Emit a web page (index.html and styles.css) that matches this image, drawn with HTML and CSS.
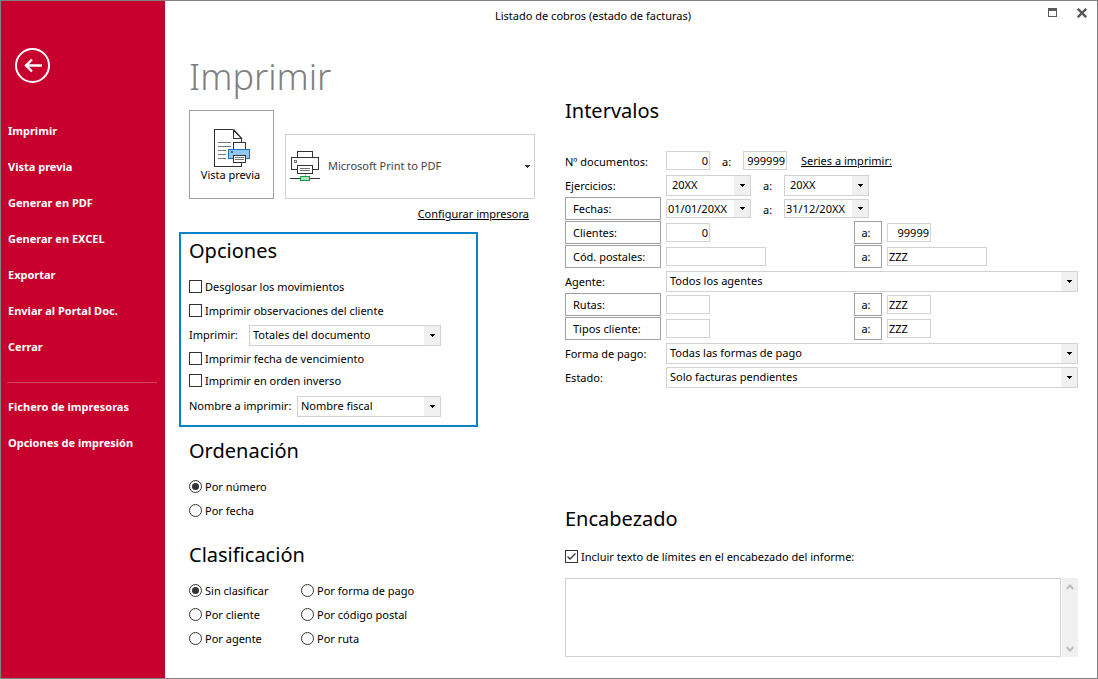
FILE: index.html
```html
<!DOCTYPE html>
<html lang="es">
<head>
<meta charset="utf-8">
<title>Listado de cobros (estado de facturas)</title>
<link rel="stylesheet" href="styles.css">
</head>
<body>
<div class="window">
  <nav class="sidebar">
    <button class="back" type="button" aria-label="Volver">
      <svg width="35" height="35" viewBox="0 0 35 35" fill="none" stroke="#fff">
        <circle cx="17.500" cy="17.500" r="16.500" stroke-width="2"/>
        <path d="M10 17.500H27M17 11.500L11 17.500L17 23.500" stroke-width="2.400"/>
      </svg>
    </button>
    <a class="nav-link" href="#">Imprimir</a>
    <a class="nav-link" href="#">Vista previa</a>
    <a class="nav-link" href="#">Generar en PDF</a>
    <a class="nav-link" href="#">Generar en EXCEL</a>
    <a class="nav-link" href="#">Exportar</a>
    <a class="nav-link" href="#">Enviar al Portal Doc.</a>
    <a class="nav-link" href="#">Cerrar</a>
    <hr class="nav-rule">
    <a class="nav-link" href="#">Fichero de impresoras</a>
    <a class="nav-link" href="#">Opciones de impresión</a>
  </nav>

  <main class="main">
    <header class="titlebar">
      <div class="window-title">Listado de cobros (estado de facturas)</div>
      <div class="window-controls">
        <button class="control" type="button" aria-label="Maximizar">
          <svg width="10" height="10" viewBox="0 0 10 10" shape-rendering="crispEdges"><path d="M0 0h9v9H0zM1 3v5h7V3z" fill="#5a5a5a" fill-rule="evenodd"/></svg>
        </button>
        <button class="control" type="button" aria-label="Cerrar ventana">
          <svg width="10" height="10" viewBox="0 0 10 10"><path d="M.8.8L9.200 9.200M9.200.8L.8 9.200" stroke="#5a5a5a" stroke-width="2.400"/></svg>
        </button>
      </div>
    </header>

    <div class="content">
      <div class="left">
        <h1 class="page-title">Imprimir</h1>
        <div class="printer-bar">
          <button class="preview" type="button">
            <svg width="41" height="38" viewBox="-4 0 41 38" fill="none" stroke="#333" shape-rendering="crispEdges">
              <path d="M27.500 13V9.500L18.500 .5H.5V37.500H27.500V34" fill="#fff"/>
              <path d="M19.500 .5V9.500H27.500" />
              <path d="M19.500 .5L28 10" shape-rendering="auto" stroke-width="1.400"/>
              <path d="M4 13.500H17M4 17.500H17M4 21.500H12M4 25.500H12M4 29.500H12" stroke="#777"/>
              <path d="M19.500 20V13.500H31.500V20" fill="#fff"/>
              <path d="M14.500 20.500H35.500V29.500H14.500Z" fill="#92c7f1" stroke="#1a73c0"/>
              <path d="M17 22h2v2h-2z" fill="#1a73c0" stroke="none"/>
              <path d="M19.500 26.500H31.500V33.500H19.500Z" fill="#fff"/>
              <path d="M21 28.500H30M21 30.500H30" stroke="#777"/>
            </svg>
            <span>Vista previa</span>
          </button>
          <div class="printer-side">
            <button class="printer" type="button" aria-haspopup="listbox">
              <svg width="30" height="31" viewBox="0 0 30 31" fill="none" stroke="#333" shape-rendering="crispEdges">
                <path d="M7.500 7V.5H22.500V7"/>
                <path d="M7 18.500H1.500V6.500H28.500V18.500H23"/>
                <path d="M4.500 9.500h2v2h-2z" stroke="#777"/>
                <path d="M7.500 14.500H22.500V22.500H7.500Z" fill="#fff"/>
                <path d="M10 17.500H20M10 19.500H20" stroke="#777"/>
                <path d="M15.500 23V25" stroke="#aaa"/>
                <path d="M0 27.500H30"/>
                <path d="M10.500 25.500H19.500V29.500H10.500Z" fill="#b5e0bd" stroke="#109a42"/>
              </svg>
              <span class="printer-name">Microsoft Print to PDF</span>
              <svg width="5" height="3" viewBox="0 0 5 3" shape-rendering="crispEdges"><path d="M0 0H5V1H4V2H3V3H2V2H1V1H0Z" fill="#333"/></svg>
            </button>
            <a class="link" href="#">Configurar impresora</a>
          </div>
        </div>

        <section class="options">
          <h2>Opciones</h2>
          <label class="row check"><input type="checkbox">Desglosar los movimientos</label>
          <label class="row check"><input type="checkbox">Imprimir observaciones del cliente</label>
          <div class="row spread">
            <label for="detail">Imprimir:</label>
            <select id="detail" class="w192"><option>Totales del documento</option></select>
          </div>
          <label class="row check"><input type="checkbox">Imprimir fecha de vencimiento</label>
          <label class="row check short"><input type="checkbox">Imprimir en orden inverso</label>
          <div class="row spread tall">
            <label for="name">Nombre a imprimir:</label>
            <select id="name" class="w144"><option>Nombre fiscal</option></select>
          </div>
        </section>

        <section class="order">
          <h2>Ordenación</h2>
          <label class="row check"><input type="radio" name="order" checked>Por número</label>
          <label class="row check"><input type="radio" name="order">Por fecha</label>
        </section>

        <section class="classify">
          <h2>Clasificación</h2>
          <div class="radio-grid">
            <label class="row check"><input type="radio" name="group" checked>Sin clasificar</label>
            <label class="row check"><input type="radio" name="group">Por forma de pago</label>
            <label class="row check"><input type="radio" name="group">Por cliente</label>
            <label class="row check"><input type="radio" name="group">Por código postal</label>
            <label class="row check"><input type="radio" name="group">Por agente</label>
            <label class="row check"><input type="radio" name="group">Por ruta</label>
          </div>
        </section>
      </div>

      <div class="right">
        <section class="ranges">
          <h2>Intervalos</h2>
          <div class="field">
            <label class="caption" for="doc-from">Nº documentos:</label>
            <div class="range">
              <input id="doc-from" class="w44 num" type="text" value="0">
              <label class="to" for="doc-to">a:</label>
              <input id="doc-to" class="w44 num" type="text" value="999999">
              <a class="link series" href="#">Series a imprimir:</a>
            </div>
          </div>
          <div class="field">
            <label class="caption" for="year-from">Ejercicios:</label>
            <div class="range">
              <select id="year-from" class="w85"><option>20XX</option></select>
              <label class="to" for="year-to">a:</label>
              <select id="year-to" class="w85"><option>20XX</option></select>
            </div>
          </div>
          <div class="field">
            <button class="pick" type="button">Fechas:</button>
            <div class="range">
              <select class="w85 date" aria-label="Fecha inicial"><option>01/01/20XX</option></select>
              <label class="to" for="date-to">a:</label>
              <select id="date-to" class="w85 date"><option>31/12/20XX</option></select>
            </div>
          </div>
          <div class="field">
            <button class="pick" type="button">Clientes:</button>
            <div class="range">
              <div class="from"><input class="w44 num" type="text" value="0" aria-label="Cliente inicial"></div>
              <button class="pick-to" type="button">a:</button>
              <input class="w44 num" type="text" value="99999" aria-label="Cliente final">
            </div>
          </div>
          <div class="field">
            <button class="pick" type="button">Cód. postales:</button>
            <div class="range">
              <div class="from"><input class="w100" type="text" aria-label="Código postal inicial"></div>
              <button class="pick-to" type="button">a:</button>
              <input class="w100" type="text" value="ZZZ" aria-label="Código postal final">
            </div>
          </div>
          <div class="field">
            <label class="caption" for="agent">Agente:</label>
            <select id="agent"><option>Todos los agentes</option></select>
          </div>
          <div class="field">
            <button class="pick" type="button">Rutas:</button>
            <div class="range">
              <div class="from"><input class="w44" type="text" aria-label="Ruta inicial"></div>
              <button class="pick-to" type="button">a:</button>
              <input class="w44" type="text" value="ZZZ" aria-label="Ruta final">
            </div>
          </div>
          <div class="field">
            <button class="pick" type="button">Tipos cliente:</button>
            <div class="range">
              <div class="from"><input class="w44" type="text" aria-label="Tipo de cliente inicial"></div>
              <button class="pick-to" type="button">a:</button>
              <input class="w44" type="text" value="ZZZ" aria-label="Tipo de cliente final">
            </div>
          </div>
          <div class="field">
            <label class="caption" for="payment">Forma de pago:</label>
            <select id="payment"><option>Todas las formas de pago</option></select>
          </div>
          <div class="field">
            <label class="caption" for="status">Estado:</label>
            <select id="status"><option>Solo facturas pendientes</option></select>
          </div>
        </section>

        <section class="heading-text">
          <h2>Encabezado</h2>
          <label class="row check"><input type="checkbox" checked>Incluir texto de límites en el encabezado del informe:</label>
          <div class="memo">
            <textarea aria-label="Texto del encabezado"></textarea>
            <div class="scrollbar">
              <button type="button" aria-label="Subir"><svg width="8" height="6" viewBox="0 0 8 6"><path d="M.7 5L4 1.500L7.300 5" fill="none" stroke="#bdbdbd" stroke-width="2"/></svg></button>
              <button type="button" aria-label="Bajar"><svg width="8" height="6" viewBox="0 0 8 6"><path d="M.7 1L4 4.500L7.300 1" fill="none" stroke="#bdbdbd" stroke-width="2"/></svg></button>
            </div>
          </div>
        </section>
      </div>
    </div>
  </main>
</div>
</body>
</html>
```
FILE: styles.css
```css
* { box-sizing: border-box; }

body {
  margin: 0;
  background: #fff;
  color: #000;
  font: 11px/16px "Noto Sans", "Open Sans", sans-serif;
}

button, input, select, textarea {
  margin: 0;
  padding: 0;
  border: 0;
  border-radius: 0;
  background: none;
  color: inherit;
  font: inherit;
}

.window {
  display: grid;
  grid-template-columns: 164px 1fr;
  min-height: 100vh;
  border: 1px solid #808080;
}

/* Sidebar */
.sidebar {
  display: flex;
  flex-direction: column;
  padding: 47px 7px 0;
  background: #c8002d;
  color: #fff;
}
.back {
  width: 35px;
  height: 35px;
  margin: 0 0 30px 7px;
}
.back svg { display: block; }
.nav-link {
  height: 36px;
  color: #fff;
  font-weight: 700;
  line-height: 36px;
  text-decoration: none;
}
.nav-rule {
  width: 150px;
  margin: 17px 0 6px -1px;
  border: 0;
  border-top: 1px solid #d64060;
}

/* Title bar */
.titlebar {
  display: flex;
  height: 30px;
}
.window-title {
  flex: 1;
  line-height: 30px;
  text-align: center;
}
.window-controls {
  display: flex;
  gap: 19px;
  width: 76px;
  padding: 7px 0 0 27px;
}
.control { width: 10px; height: 10px; }
.control svg { display: block; }

/* Content */
.content {
  display: grid;
  grid-template-columns: 376px 1fr;
  padding: 0 19px 20px 24px;
}
.left { padding-top: 20px; }
.right { padding-top: 64px; }

h1, h2 { margin: 0; font-weight: 400; }
h2 { margin-bottom: 8px; font-size: 20px; line-height: 32px; }
.page-title {
  margin-bottom: 7px;
  color: #808080;
  font-size: 36px;
  font-weight: 300;
  line-height: 52px;
}
.link { color: #000; }

.printer-bar {
  display: flex;
  gap: 11px;
}
.preview {
  display: flex;
  flex-direction: column;
  align-items: center;
  width: 85px;
  height: 89px;
  padding: 18px 2px 0 0;
  border: 1px solid #a0a0a0;
}
.printer-side {
  display: flex;
  flex-direction: column;
  align-items: flex-end;
  padding-top: 24px;
}
.printer-side .link { margin: 7px 6px 0 0; }
.printer {
  display: flex;
  align-items: center;
  width: 250px;
  height: 65px;
  padding: 0 4px 1px;
  border: 1px solid #d2d2d2;
  color: #444;
  text-align: left;
}
.printer-name { flex: 1; padding-left: 8px; }

/* Sections */
.options {
  width: 299px;
  margin: 10px 0 0 -10px;
  padding: 1px 35px 4px 8px;
  border: 2px solid #0a82c8;
}
.order { margin-top: 8px; }
.classify { margin-top: 16px; }
.radio-grid {
  display: grid;
  grid-template-columns: 112px 1fr;
}

.row {
  display: flex;
  align-items: center;
  height: 24px;
}
.spread { justify-content: space-between; }
.short { height: 20px; }
.tall { height: 30px; }
.check { gap: 3px; }

input[type="checkbox"], input[type="radio"] {
  appearance: none;
  width: 13px;
  height: 13px;
  margin-bottom: 1px;
  border: 1px solid #333;
  background: #fff center / 11px 11px no-repeat;
}
input[type="checkbox"]:checked {
  background-image: url("data:image/svg+xml,%3Csvg xmlns='http://www.w3.org/2000/svg' viewBox='0 0 11 11'%3E%3Cpath d='M1.500 5.500L4 8L9.500 2.500' fill='none' stroke='%23333' stroke-width='1.300'/%3E%3C/svg%3E");
}
input[type="radio"] { border-radius: 50%; }
input[type="radio"]:checked {
  background-image: url("data:image/svg+xml,%3Csvg xmlns='http://www.w3.org/2000/svg' viewBox='0 0 11 11'%3E%3Ccircle cx='5.500' cy='5.500' r='3.500' fill='%23333'/%3E%3C/svg%3E");
}

select {
  appearance: none;
  width: 100%;
  height: 21px;
  padding: 0 18px 0 3px;
  border: 1px solid #d2d2d2;
  background:
    url("data:image/svg+xml,%3Csvg xmlns='http://www.w3.org/2000/svg' width='5' height='3' shape-rendering='crispEdges'%3E%3Cpath d='M0 0H5V1H4V2H3V3H2V2H1V1H0Z'/%3E%3C/svg%3E") right 5px center no-repeat,
    linear-gradient(#f0f0f0, #f0f0f0) right / 16px 100% no-repeat;
}
input[type="text"] {
  height: 19px;
  margin-bottom: 1px;
  padding: 0 1px;
  border: 1px solid #d2d2d2;
}
.num { text-align: right; }
.w44 { width: 44px; }
.w85 { width: 85px; padding-left: 5px; }
.w100 { width: 100px; }
.w144 { width: 144px; }
.w192 { width: 192px; }
.date { height: 19px; margin-bottom: 1px; padding-left: 1px; }

/* Ranges */
.ranges h2 { margin-bottom: 22px; }
.field {
  display: grid;
  grid-template-columns: 96px 1fr;
  align-items: center;
  column-gap: 5px;
  height: 24px;
}
.caption { padding-top: 2px; }
.range { display: flex; align-items: center; }
.to { width: 33px; padding: 1px 0 0 12px; }
.series { margin-left: 14px; }
.from { display: flex; width: 188px; }
.pick, .pick-to {
  height: 23px;
  margin-bottom: 1px;
  border: 1px solid #a0a0a0;
}
.pick { padding-left: 7px; text-align: left; }
.pick-to { width: 28px; margin-right: 5px; padding-right: 4px; }

/* Header text */
.heading-text { margin-top: 114px; }
.heading-text h2 { margin-bottom: 10px; }
.memo {
  display: flex;
  gap: 1px;
  height: 79px;
  margin-top: 9px;
}
.memo textarea {
  flex: 1;
  border: 1px solid #d2d2d2;
  resize: none;
}
.scrollbar {
  display: flex;
  flex-direction: column;
  justify-content: space-between;
  width: 16px;
  background: #f0f0f0;
}
.scrollbar button {
  display: grid;
  place-items: center;
  height: 17px;
}
```
